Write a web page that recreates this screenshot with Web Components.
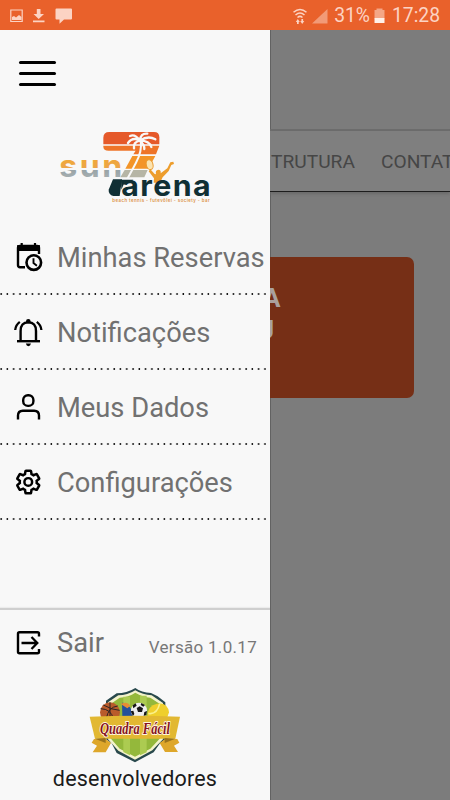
<!DOCTYPE html>
<html lang="pt-BR">
<head>
<meta charset="utf-8">
<meta name="viewport" content="width=device-width, initial-scale=1">
<title>Sun7 Arena</title>
<style>
  html, body { margin: 0; height: 100%; }
  body { font-family: Roboto, "Liberation Sans", sans-serif; background: #7c7c7c; overflow: hidden; }
</style>
</head>
<body>
<arena-app></arena-app>

<script>
const ICONS = {
  calendar: `
    <path d="M8.7 1v5M22 1v5" stroke-width="2.2"/>
    <path d="M12 25.2H7Q5 25.2 5 23.2V5.8Q5 4 7 4H24Q26 4 26 5.8V12"/>
    <path d="M4 3.2h23v5.8H4z" fill="#000" stroke="none"/>
    <circle cx="20.8" cy="20.6" r="7.3" stroke-width="2.6"/>
    <path d="M20.5 16.3v4.8l3.4 2.6" stroke-width="1.9"/>`,
  bell: `
    <path d="M4 24.2h23" stroke-width="2.4"/>
    <path d="M7.6 24V14q0-8.6 7.7-8.6T23 14v10" stroke-width="2.4"/>
    <path d="M12.8 26.6h5.2q-.7 2.6-2.6 2.6T12.8 26.6z" fill="#000" stroke="none"/>
    <circle cx="15.3" cy="4.3" r="2.3" fill="#000" stroke="none"/>
    <path d="M2.2 13Q2.6 8 6.8 4.8M28.4 13Q28 8 23.8 4.8" stroke-width="2.3"/>`,
  user: `
    <rect x="10.2" y="3.3" width="10.2" height="10.6" rx="4.7"/>
    <path d="M5 27.5v-4q0-4.8 4.8-4.8h11.4Q26 18.7 26 23.5v4"/>`,
  gear: `
    <g transform="translate(1.7 1.4) scale(1.13)" stroke-width="2.2">
      <path d="M19.43 12.98c.04-.32.07-.64.07-.98 0-.34-.03-.66-.07-.98l2.11-1.65c.19-.15.24-.42.12-.64l-2-3.46c-.09-.16-.26-.25-.44-.25-.06 0-.12.01-.17.03l-2.49 1c-.52-.4-1.08-.73-1.69-.98l-.38-2.65C14.46 2.18 14.25 2 14 2h-4c-.25 0-.46.18-.49.42l-.38 2.65c-.61.25-1.17.59-1.69.98l-2.49-1c-.06-.02-.12-.03-.18-.03-.17 0-.34.09-.43.25l-2 3.46c-.13.22-.07.49.12.64l2.11 1.65c-.04.32-.07.65-.07.98 0 .33.03.66.07.98l-2.11 1.65c-.19.15-.24.42-.12.64l2 3.46c.09.16.26.25.44.25.06 0 .12-.01.17-.03l2.49-1c.52.4 1.08.73 1.69.98l.38 2.65c.03.24.24.42.49.42h4c.25 0 .46-.18.49-.42l.38-2.65c.61-.25 1.17-.59 1.69-.98l2.49 1c.06.02.12.03.18.03.17 0 .34-.09.43-.25l2-3.46c.12-.22.07-.49-.12-.64l-2.11-1.65z"/>
      <circle cx="12" cy="12" r="3.4"/>
    </g>`,
  exit: `
    <path d="M26 8.5V5.8Q26 4.3 24.5 4.3H6.5Q5 4.3 5 5.8v18Q5 25.3 6.5 25.3h18q1.5 0 1.5-1.5V21"/>
    <path d="M8.5 15h15.5M18.5 9l5.8 6-5.8 6" stroke-width="2.3"/>`
}

class StatusBar extends HTMLElement {
  constructor () {
    super()
    this.attachShadow({ mode: 'open' }).innerHTML = `
      <style>
        :host {
          display: flex;
          align-items: center;
          box-sizing: border-box;
          height: 30px;
          padding: 2px 10px 0;
          background: #e9612b;
          color: #fcd3c3;
          font-size: 19.3px;
          line-height: 28px;
        }
        svg { display: block; fill: currentColor; }
        .left { display: flex; gap: 9px; flex: 1; }
        .right { display: flex; align-items: center; }
        .battery { margin: 0 7px 0 4px; }
        .signal { margin: 0 6px 0 5px; }
      </style>
      <div class="left">
        <svg width="13" height="16" viewBox="0 0 13 16"><path d="M.8 2h11.4v11.5H.8z" fill="none" stroke="currentColor" stroke-width="1.2"/><path d="M2 12V9l2-1 2 1.5L9 7l2.5 2v3z"/></svg>
        <svg width="14" height="16" viewBox="0 0 14 16"><path d="M4.8 1h3.7v5H12L6.7 11 1.5 6h3.3zM1 12.5h11.5v1.7H1z"/></svg>
        <svg width="18" height="16" viewBox="0 0 18 16"><path d="M1.5 .5h14.5q1 0 1 1v9q0 1-1 1H9l-4.500 4.300V11.500h-3q-1 0-1-1v-9q0-1 1-1z"/></svg>
      </div>
      <div class="right">
        <svg width="14" height="17" viewBox="0 0 14 17">
          <g fill="none" stroke="currentColor" stroke-width="1.5"><path d="M.5 4.3q6.5-5.5 13 0M2.5 7q4.5-4 9 0M4.5 9.5q2.5-2.2 5 0"/></g>
          <path d="M4.8 11l2 3H5.7v2H4v-2H2.8zM9.2 16l-2-3h1.2v-2h1.7v2h1.2z"/>
        </svg>
        <svg class="signal" width="16" height="15" viewBox="0 0 16 15"><path d="M15.5 0v14.5H0z" opacity=".5"/></svg>
        <span>31%</span>
        <svg class="battery" width="11" height="16" viewBox="0 0 11 16"><path d="M2.5 .5h6V2h2v8.500H.5V2h2z" opacity=".6"/><path d="M.5 10h10v5H.5z" fill="#fff0e8"/></svg>
        <span>17:28</span>
      </div>
    `
  }
}

class MenuToggle extends HTMLElement {
  constructor () {
    super()
    this.attachShadow({ mode: 'open' }).innerHTML = `
      <style>
        :host { display: flex; flex-direction: column; gap: 8px; width: 37px; }
        i { height: 3px; border-radius: 2px; background: #000; }
      </style>
      <i></i><i></i><i></i>
    `
  }
}

class ArenaLogo extends HTMLElement {
  constructor () {
    super()
    this.attachShadow({ mode: 'open' }).innerHTML = `
      <style>
        :host { display: block; width: 170px; height: 90px; }
        svg { display: block; }
      </style>
      <svg width="170" height="90" viewBox="0 0 510 270">
        <defs>
          <linearGradient id="sun" gradientUnits="userSpaceOnUse" x1="0" y1="120" x2="0" y2="174">
            <stop offset="0" stop-color="#f0a83a"/><stop offset=".46" stop-color="#eca54a"/>
            <stop offset=".46" stop-color="#f8f8f8"/><stop offset=".53" stop-color="#f8f8f8"/>
            <stop offset=".53" stop-color="#98a3a6"/><stop offset="1" stop-color="#a6afb1"/>
          </linearGradient>
        </defs>
        <text x="28" y="172" font-family="Inter, sans-serif" font-weight="700" font-size="91" letter-spacing="7" textLength="196" lengthAdjust="spacingAndGlyphs" fill="url(#sun)">sun</text>
        <!-- striped seven -->
        <path d="M178 36H312Q328 36 328 52V73H160V53Q160 36 178 36z" fill="#e5592a"/>
        <path d="M160 77H328L318 103H250L257 92H176Q160 92 160 80z" fill="#ee7429"/>
        <path d="M247 108H316L295 146H226z" fill="#f39428"/>
        <path d="M224 150H293L283 172H211z" fill="#b6b5a5"/>
        <!-- palm -->
        <g fill="none" stroke="#f8f8f8" stroke-linecap="round">
          <path d="M272 64Q277 92 258 128T231 178" stroke-width="6"/>
          <path d="M270 62Q255 41 240 48M270 62Q248 49 234 69M270 62Q249 66 252 85M270 62Q271 39 292 41M270 62Q294 45 316 58M270 62Q298 62 304 81M270 62Q284 76 283 87" stroke-width="7"/>
        </g>
        <!-- player with racket -->
        <ellipse cx="299" cy="134" rx="10" ry="15" fill="#fbe3b0" stroke="#e99b2f" stroke-width="3" transform="rotate(-15 299 134)"/>
        <path d="M301 148l13 14 4 1q-3-13 7-14 9 0 7 11l20-15 9-18 9-2 2 7-8 3-8 18-18 19-8 16H311l1-13-16-21z" fill="#ed9d2c"/>
        <path d="M189 178H216L209 228H190Q175 224 176 209z" fill="#102f34"/>
        <path d="M213 179h37l-9 8h-17l-10 22z" fill="#102f34"/>
        <text x="214" y="227" font-family="Inter, sans-serif" font-weight="700" font-size="88" letter-spacing="4" textLength="272" lengthAdjust="spacingAndGlyphs" fill="#102f34">arena</text>
        <text x="187" y="247" font-family="Inter, sans-serif" font-weight="600" font-size="13" textLength="292" fill="#dc9349">beach tennis - futevôlei - society - bar</text>
      </svg>
    `
  }
}

class MenuItem extends HTMLElement {
  constructor () {
    super()
    const icon = ICONS[this.getAttribute('icon')]
    this.attachShadow({ mode: 'open' }).innerHTML = `
      <style>
        :host {
          display: flex;
          align-items: center;
          gap: 14px;
          box-sizing: border-box;
          height: 75px;
          padding-left: 13px;
          color: #717171;
          font-size: 27.3px;
          line-height: 36px;
          white-space: nowrap;
        }
        /* dotted separator along the bottom edge */
        :host(:not([plain])) {
          background: radial-gradient(circle at 1.2px 1px, #111 .6px, transparent 1.2px) 0 100% / 6.29px 2px repeat-x;
        }
        :host([plain]) { height: auto; }
        svg { flex: none; margin-bottom: 1px; fill: none; stroke: #000; stroke-width: 2.4; }
      </style>
      <svg width="30" height="30" viewBox="0 0 30 30">${icon}</svg>
      <slot></slot>
    `
  }
}

class DeveloperBadge extends HTMLElement {
  constructor () {
    super()
    this.attachShadow({ mode: 'open' }).innerHTML = `
      <style>
        :host { display: flex; flex-direction: column; align-items: center; color: #1b1b1b; font-size: 21.5px; line-height: 28px; }
        svg { display: block; margin-bottom: 1px; }
      </style>
      <svg width="110" height="84" viewBox="0 0 330 252">
        <path d="M166 24Q184 38 213 39L233 49 256 67V178L240 190 221 217 165 247 110 219 95 190 78 178V62L110 40Q140 40 166 24z" fill="#29494d"/>
        <path d="M166 31Q188 45 215 46L249 69V178L217 211 165 239 115 212 84 178V67L115 46Q142 46 166 31z" fill="#f4f3cc"/>
        <path d="M166 38Q188 51 211 53L241 73V174L211 206 165 230 119 206 91 174V73L119 53Q146 51 166 38z" fill="#94b83b"/>
        <path d="M130 50h20v176l-20-10zM180 47h20v170l-20 9z" fill="#accb51"/>
        <path d="M126 68Q154 70 158 108H127z" fill="#24509b"/>
        <path d="M122 72q20-10 29 5l-9 8z" fill="#e78c35"/>
        <circle cx="90" cy="97" r="30" fill="#b95b2b"/>
        <path d="M90 67v50M62 86q31 1 38 30M113 78q-28 3-34 37M70 75q26 15 49 16" fill="none" stroke="#2c2523" stroke-width="3"/>
        <circle cx="177" cy="92" r="24" fill="#eee"/>
        <path d="M170 84l9-5 10 6-3 11h-12zM158 76l9-6 3 7-10 8zM184 69l11 6-5 5-8-5zM152 94l8-2 3 10-4 6zM193 96l8-3-2 12-8 3z" fill="#171717"/>
        <path d="M202 110Q202 77 231 71 263 66 267 97L262 112z" fill="#efcf2c"/>
        <path d="M205 100q26 5 34-29" fill="none" stroke="#fbf18a" stroke-width="5"/>
        <path d="M42 177L35 188 51 197 38 217H77L93 189 74 175zM292 177L298 188 282 197 294 216H255L239 189 259 175z" fill="#dea72b"/>
        <path d="M29 110Q165 105 300 110L286 176H45z" fill="#e2b832"/>
        <path d="M45 176l32 13V174zM286 176l-32 13V174z" fill="#99731d"/>
        <text x="60" y="161" font-family="Liberation Serif, serif" font-weight="700" font-style="italic" font-size="53" textLength="210" lengthAdjust="spacingAndGlyphs" fill="#85141d" stroke="#fff5df" stroke-width="6" stroke-linejoin="round" paint-order="stroke">Quadra Fácil</text>
      </svg>
      <slot></slot>
    `
  }
}

class SideDrawer extends HTMLElement {
  constructor () {
    super()
    this.attachShadow({ mode: 'open' }).innerHTML = `
      <style>
        :host {
          display: flex;
          flex-direction: column;
          flex: none;
          width: 270px;
          background: #f8f8f8;
        }
        header { height: 190px; box-sizing: border-box; padding: 31px 0 0 19px; }
        arena-logo { margin: 34px 0 0 31px; }
        nav { flex: 1; padding-right: 4px; }
        footer {
          box-sizing: border-box;
          height: 192px;
          padding-top: 15px;
          border-top: 2px solid #cfcfcf;
          box-shadow: 0 -1px 1px #ececec;
        }
        .row { display: flex; align-items: center; justify-content: space-between; padding-right: 13px; }
        .version { color: #777; font-size: 17px; letter-spacing: .3px; padding-top: 8px; }
        developer-badge { margin-top: 19px; letter-spacing: .2px; }
      </style>
      <header>
        <menu-toggle></menu-toggle>
        <arena-logo></arena-logo>
      </header>
      <nav>
        <menu-item icon="calendar">Minhas Reservas</menu-item>
        <menu-item icon="bell">Notificações</menu-item>
        <menu-item icon="user">Meus Dados</menu-item>
        <menu-item icon="gear">Configurações</menu-item>
      </nav>
      <footer>
        <div class="row">
          <menu-item icon="exit" plain>Sair</menu-item>
          <span class="version">Versão 1.0.17</span>
        </div>
        <developer-badge>desenvolvedores</developer-badge>
      </footer>
    `
  }
}

// the part of the home page that stays visible, dimmed, beside the drawer
class DimmedPage extends HTMLElement {
  constructor () {
    super()
    this.attachShadow({ mode: 'open' }).innerHTML = `
      <style>
        :host { display: block; flex: 1; min-width: 0; overflow: hidden; background: #7c7c7c; box-shadow: inset 1px 0 #626262; }
        .top { height: 101px; border-bottom: 2px solid #6c6c6c; box-sizing: border-box; }
        .tabs {
          display: flex;
          align-items: center;
          gap: 26px;
          box-sizing: border-box;
          height: 61px;
          padding-left: 1px;
          background: #7f7f7f;
          border-bottom: 1px solid #1d1d1d;
          box-shadow: 0 2px 3px #6b6b6b;
          color: #464646;
          font-size: 19.2px;
          white-space: nowrap;
        }
        .card {
          box-sizing: border-box;
          width: 144px;
          height: 141px;
          margin-top: 65px;
          padding-top: 25px;
          border-radius: 0 7px 7px 0;
          background: #762f16;
          color: #aaa19d;
          font-size: 26px;
          font-weight: 700;
          line-height: 32px;
          overflow: hidden;
        }
        .card div { margin-left: -7px; }
        .card div + div { margin-left: -13px; }
      </style>
      <div class="top"></div>
      <div class="tabs"><span>TRUTURA</span><span>CONTAT</span></div>
      <div class="card"><div>A</div><div>U</div></div>
    `
  }
}

class ArenaApp extends HTMLElement {
  constructor () {
    super()
    this.attachShadow({ mode: 'open' }).innerHTML = `
      <style>
        :host { display: flex; flex-direction: column; height: 800px; }
        main { display: flex; flex: 1; min-height: 0; }
      </style>
      <status-bar></status-bar>
      <main>
        <side-drawer></side-drawer>
        <dimmed-page></dimmed-page>
      </main>
    `
  }
}

customElements.define('status-bar', StatusBar)
customElements.define('menu-toggle', MenuToggle)
customElements.define('arena-logo', ArenaLogo)
customElements.define('menu-item', MenuItem)
customElements.define('developer-badge', DeveloperBadge)
customElements.define('side-drawer', SideDrawer)
customElements.define('dimmed-page', DimmedPage)
customElements.define('arena-app', ArenaApp)
</script>
</body>
</html>
